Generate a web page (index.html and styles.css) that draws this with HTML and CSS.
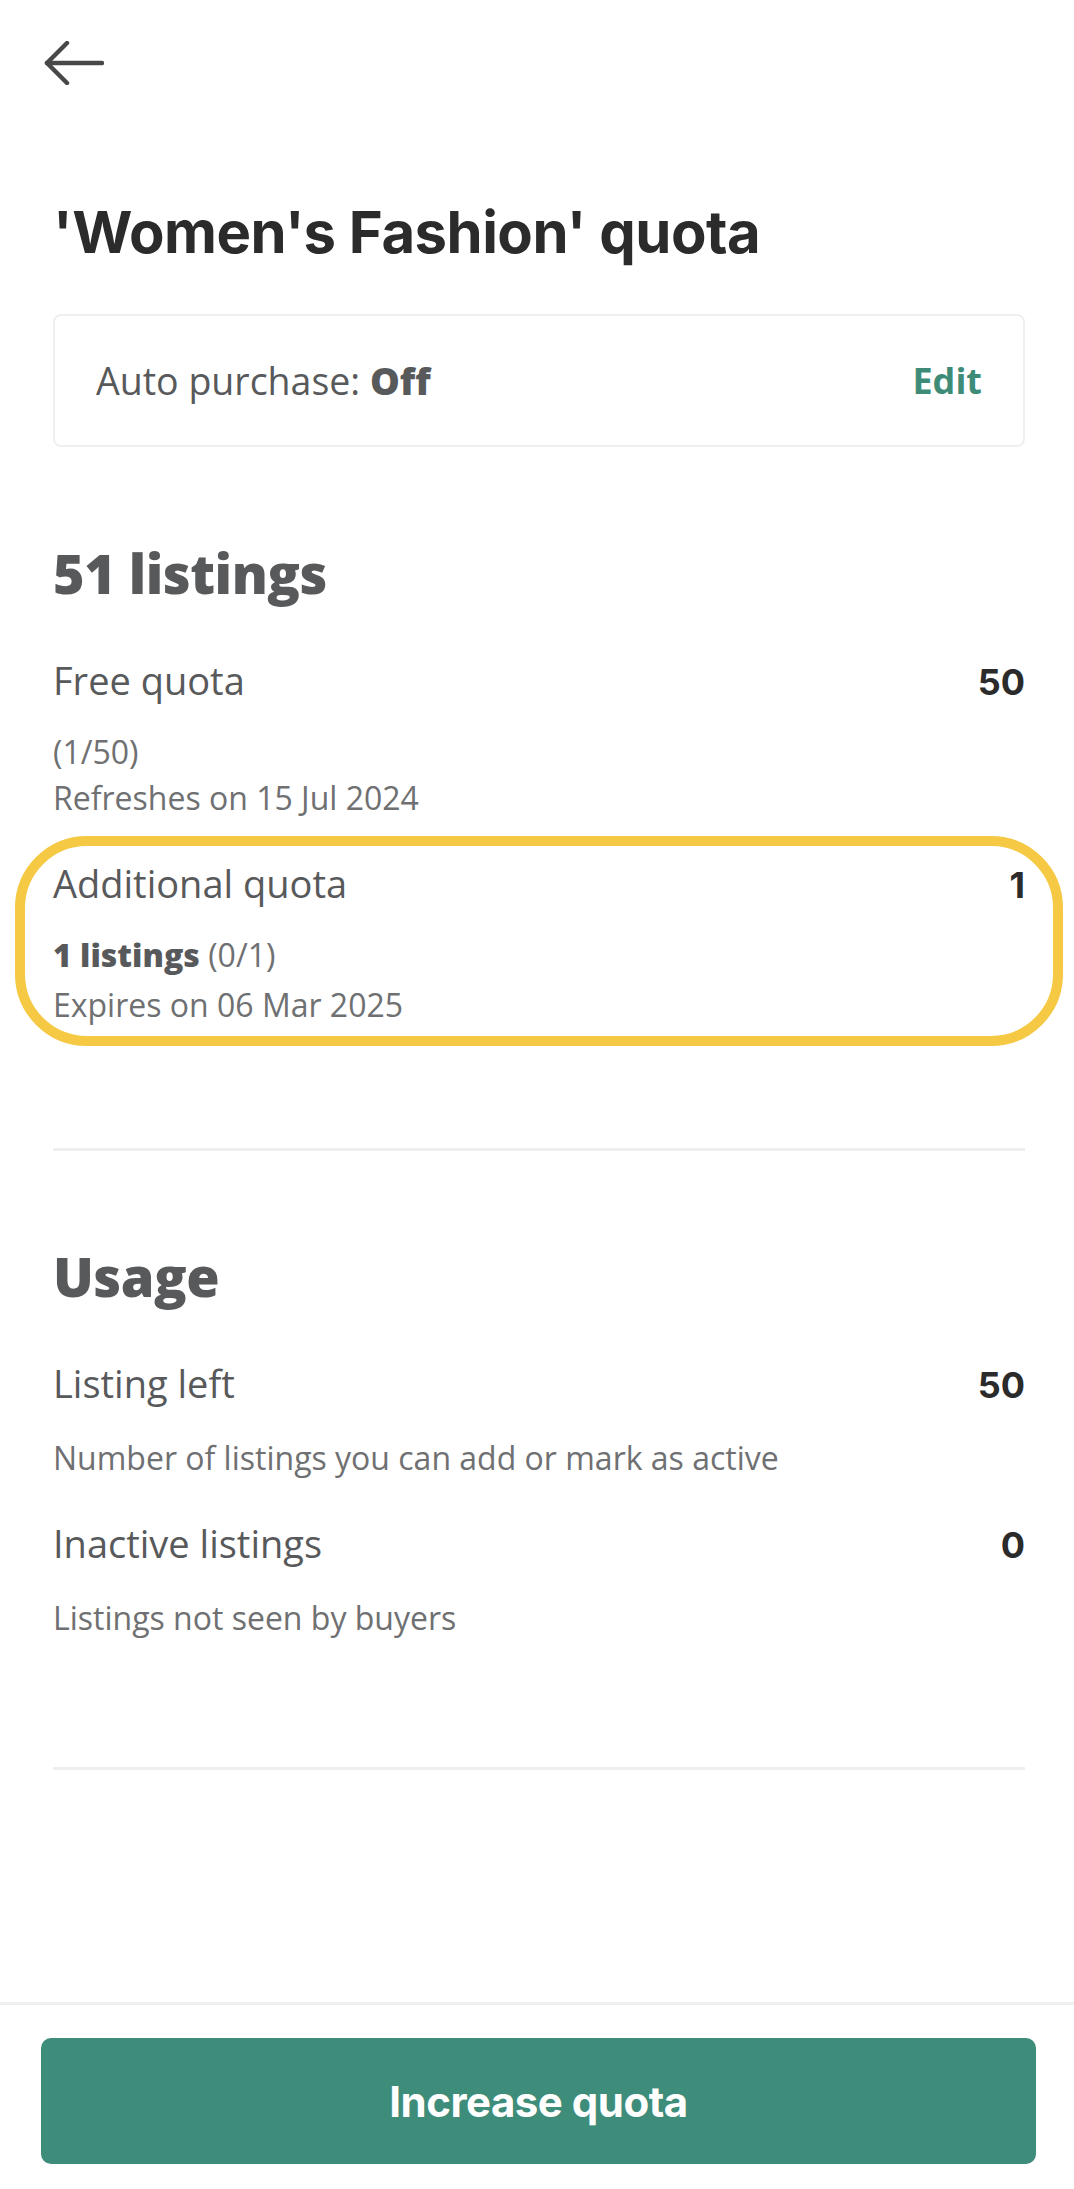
FILE: index.html
```html
<!DOCTYPE html>
<html lang="en">
<head>
<meta charset="utf-8">
<title>'Women's Fashion' quota</title>
<link rel="stylesheet" href="styles.css">
</head>
<body>
<div class="screen">
  <header class="topbar">
    <button class="back" aria-label="Back">
      <svg width="60" height="44" viewBox="0 0 60 44" fill="none" stroke="#484848" stroke-width="4.5" stroke-linecap="round" stroke-linejoin="round">
        <path d="M58 22 H3"/>
        <path d="M23 2 L3 22 L23 42"/>
      </svg>
    </button>
  </header>

  <main class="content">
    <h1 class="title">'Women's Fashion' quota</h1>

    <div class="auto-card">
      <span class="auto-label">Auto purchase: <b>Off</b></span>
      <a class="edit" href="#">Edit</a>
    </div>

    <section class="section section-first">
      <h2 class="section-title">51 listings</h2>
      <div class="row">
        <div class="row-head">
          <span class="row-label">Free quota</span>
          <span class="row-value">50</span>
        </div>
        <p class="row-sub">(1/50)</p>
        <p class="row-sub">Refreshes on 15 Jul 2024</p>
      </div>
      <div class="row row-highlight">
        <div class="row-head">
          <span class="row-label">Additional quota</span>
          <span class="row-value">1</span>
        </div>
        <p class="row-sub row-sub-strong"><b>1 listings</b> (0/1)</p>
        <p class="row-sub">Expires on 06 Mar 2025</p>
      </div>
    </section>

    <hr class="divider">

    <section class="section">
      <h2 class="section-title">Usage</h2>
      <div class="row">
        <div class="row-head">
          <span class="row-label">Listing left</span>
          <span class="row-value">50</span>
        </div>
        <p class="row-sub row-desc">Number of listings you can add or mark as active</p>
      </div>
      <div class="row">
        <div class="row-head">
          <span class="row-label">Inactive listings</span>
          <span class="row-value">0</span>
        </div>
        <p class="row-sub row-desc">Listings not seen by buyers</p>
      </div>
    </section>

    <hr class="divider divider-end">
  </main>

  <footer class="bottom-bar">
    <button class="primary">Increase quota</button>
  </footer>
</div>
</body>
</html>
```

FILE: styles.css
```css
* { box-sizing: border-box; }

html, body {
  margin: 0;
  padding: 0;
  background: #ffffff;
}

body {
  font-family: "Open Sans", "Noto Sans", sans-serif;
  color: #58595b;
}

.screen {
  min-height: 100vh;
  display: flex;
  flex-direction: column;
}

.topbar {
  height: 126px;
  display: flex;
  align-items: center;
  padding-left: 44px;
}

.back {
  border: 0;
  background: none;
  padding: 0;
  margin: 0;
  display: block;
  line-height: 0;
  cursor: pointer;
}

.content {
  flex: 1;
  padding: 0 49px 0 53px;
}

.title {
  margin: 71px 0 0 0;
  font-family: Inter, "Liberation Sans", sans-serif;
  font-weight: 700;
  font-size: 58px;
  line-height: 70px;
  letter-spacing: -0.5px;
  color: #2b2b2b;
}

.auto-card {
  margin-top: 47px;
  height: 133px;
  border: 2px solid #efefef;
  border-radius: 8px;
  display: flex;
  align-items: center;
  justify-content: space-between;
  padding: 0 41px 0 41px;
}

.auto-label {
  font-size: 37.5px;
  color: #58595b;
}

.auto-label b {
  font-weight: 800;
  color: #58595b;
}

.edit {
  font-size: 36px;
  font-weight: 700;
  color: #3e8c78;
  text-decoration: none;
}

.section {
  margin-top: 93px;
}

.section-first {
  margin-top: 94px;
}

.section-title {
  margin: 0;
  font-size: 54px;
  line-height: 64px;
  font-weight: 800;
  color: #58595b;
  letter-spacing: -0.5px;
}

.row {
  margin-top: 38px;
  position: relative;
}

.section-title + .row {
  margin-top: 51px;
}

.row-head {
  display: flex;
  justify-content: space-between;
  align-items: baseline;
  line-height: 48px;
}

.row-label {
  font-size: 38px;
  color: #58595b;
}

.row-value {
  font-family: Inter, "Liberation Sans", sans-serif;
  font-weight: 700;
  font-size: 36px;
  color: #2b2b2b;
}

.row-sub {
  margin: 0;
  font-size: 32px;
  line-height: 46px;
  color: #6f7072;
}

.row-head + .row-sub {
  margin-top: 23px;
}

.row-head + .row-desc {
  margin-top: 26px;
}

.row-sub-strong {
  margin-bottom: 4px;
}

.row-sub b {
  font-weight: 800;
  color: #58595b;
}

.row-highlight::after {
  content: "";
  position: absolute;
  top: -23px;
  bottom: -18px;
  left: -38px;
  right: -38px;
  border: 10px solid #f5c944;
  border-radius: 72px;
  pointer-events: none;
}

.divider {
  margin: 120px 0 0 0;
  border: 0;
  height: 3px;
  background: #efefef;
}

.divider-end {
  margin-top: 126px;
}

.bottom-bar {
  border-top: 3px solid #efefef;
  padding: 33px 38px 25px 41px;
}

.primary {
  display: flex;
  align-items: center;
  justify-content: center;
  width: 100%;
  height: 126px;
  border: 0;
  border-radius: 10px;
  background: #3e8c7a;
  color: #ffffff;
  font-family: Inter, "Liberation Sans", sans-serif;
  font-weight: 700;
  font-size: 42px;
  letter-spacing: -0.5px;
  cursor: pointer;
}
```
